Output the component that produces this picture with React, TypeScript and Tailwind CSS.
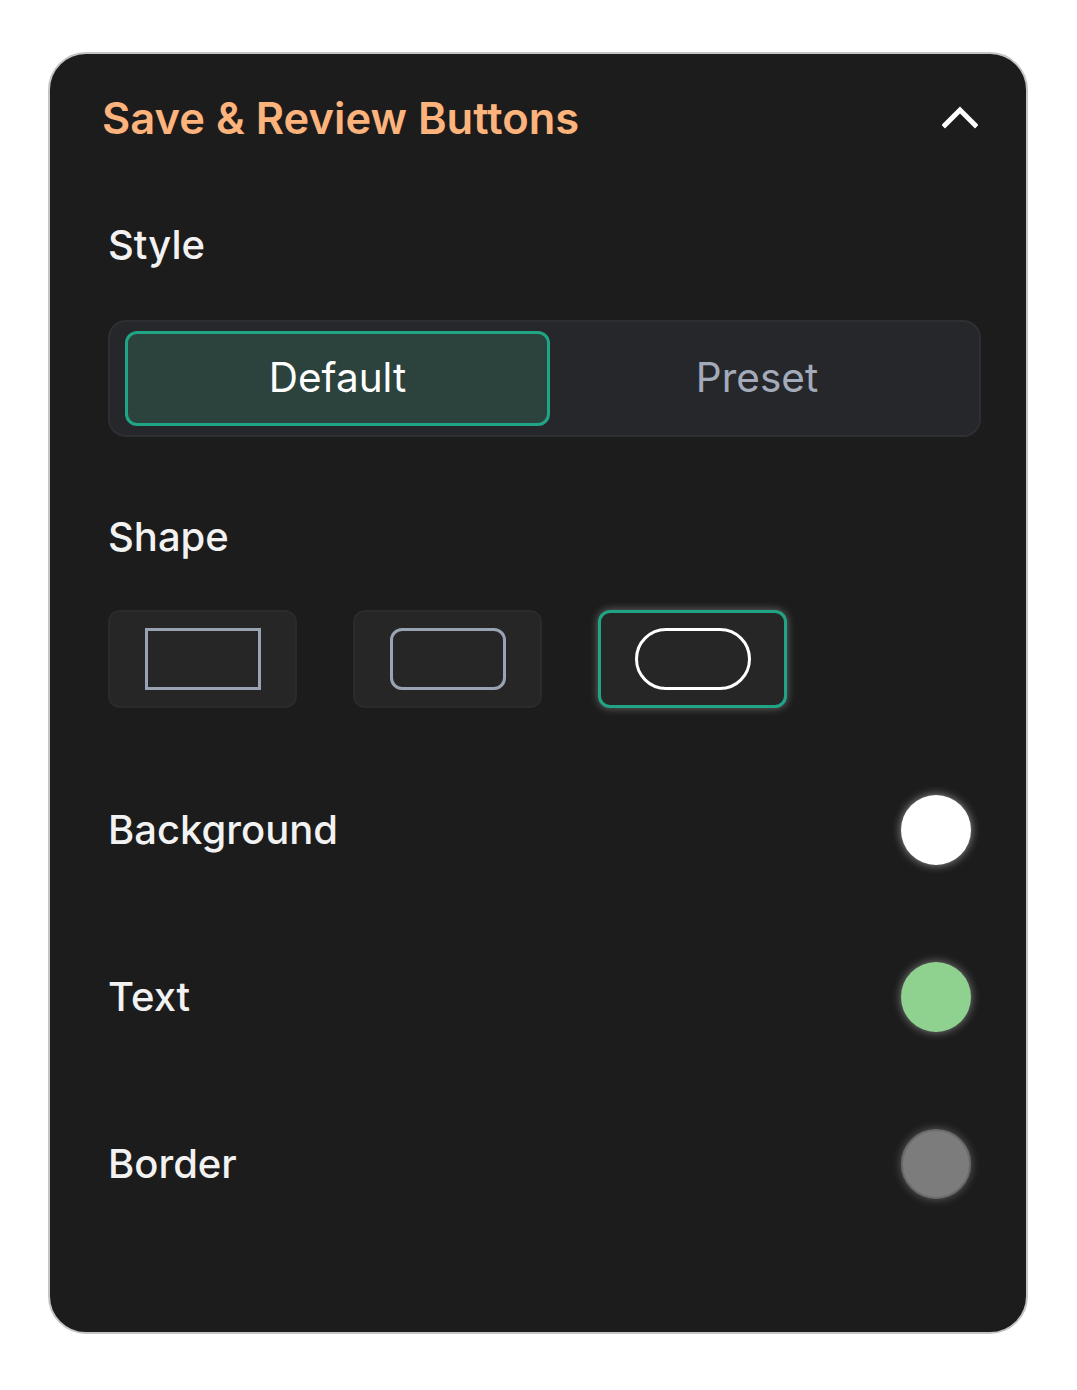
import { useState } from 'react';

type StyleMode = 'default' | 'preset';
type ShapeKind = 'square' | 'rounded' | 'pill';

const shapes: { kind: ShapeKind; inner: string }[] = [
  { kind: 'square', inner: 'rounded-none' },
  { kind: 'rounded', inner: 'rounded-[12px]' },
  { kind: 'pill', inner: 'rounded-full' },
];

const colorRows = [
  { label: 'Background', swatch: 'bg-white shadow-[0_0_10px_rgba(255,255,255,0.55)]' },
  { label: 'Text', swatch: 'bg-[#8fd28f] shadow-[0_0_10px_rgba(255,255,255,0.45)]' },
  { label: 'Border', swatch: 'bg-[#7c7c7c] border-2 border-[#6a6a6a] shadow-[0_0_10px_rgba(255,255,255,0.3)]' },
];

export default function App() {
  const [mode, setMode] = useState<StyleMode>('default');
  const [shape, setShape] = useState<ShapeKind>('pill');

  return (
    <div className="min-h-screen bg-white pl-[48px] pt-[52px] font-['Inter','Liberation_Sans',sans-serif]">
      <section className="flex h-[1282px] w-[980px] flex-col rounded-[38px] border-2 border-[#c4c4c4] bg-[#1c1c1c] pl-[58px] pr-[45px]">
        <header className="mt-[43px] flex h-[44px] items-center justify-between">
          <h2 className="-ml-[6px] text-[43.5px] font-semibold text-[#fdb37c]">Save &amp; Review Buttons</h2>
          <button aria-label="Collapse" className="-mt-[5px] mr-[3px] text-white">
            <svg width="36" height="24" viewBox="0 0 36 24" fill="none" stroke="currentColor" strokeWidth="5" strokeLinecap="square">
              <path d="M3 20 L18 5 L33 20" />
            </svg>
          </button>
        </header>

        <h3 className="mt-[80px] text-[40px] font-medium leading-[48px] text-[#f2f2f2]">Style</h3>

        <div className="mt-[51px] grid h-[117px] grid-cols-[425px_1fr] rounded-[18px] border-2 border-[#2e2f33] bg-[#26272a] px-[15px] py-[9px]">
          {(['default', 'preset'] as StyleMode[]).map((m) => (
            <button
              key={m}
              onClick={() => setMode(m)}
              className={
                mode === m
                  ? 'rounded-[12px] border-[3px] border-[#1fa586] bg-[#2c423c] text-[40.5px] text-white'
                  : 'rounded-[12px] text-[40.5px] text-[#a3abbb]'
              }
            >
              {m === 'default' ? 'Default' : 'Preset'}
            </button>
          ))}
        </div>

        <h3 className="mt-[76px] text-[40px] font-medium leading-[48px] text-[#f2f2f2]">Shape</h3>

        <div className="mt-[49px] flex gap-[56px]">
          {shapes.map((s) => {
            const active = shape === s.kind;
            return (
              <button
                key={s.kind}
                onClick={() => setShape(s.kind)}
                className={
                  active
                    ? 'flex h-[98px] w-[189px] items-center justify-center rounded-[12px] border-[3px] border-[#1fa586] bg-[#262626] shadow-[0_0_8px_rgba(255,255,255,0.35)]'
                    : 'flex h-[98px] w-[189px] items-center justify-center rounded-[12px] border-2 border-[#2b2b2b] bg-[#262626]'
                }
              >
                <span
                  className={`h-[62px] w-[116px] border-[3px] ${s.inner} ${active ? 'border-white' : 'border-[#9aa3b4]'}`}
                />
              </button>
            );
          })}
        </div>

        <div className="mt-[87px] flex flex-col gap-[97px] pr-[10px]">
          {colorRows.map((r) => (
            <div key={r.label} className="flex h-[70px] items-center justify-between">
              <span className="text-[40px] font-medium text-[#f2f2f2]">{r.label}</span>
              <span className={`h-[70px] w-[70px] rounded-full ${r.swatch}`} />
            </div>
          ))}
        </div>
      </section>
    </div>
  );
}
